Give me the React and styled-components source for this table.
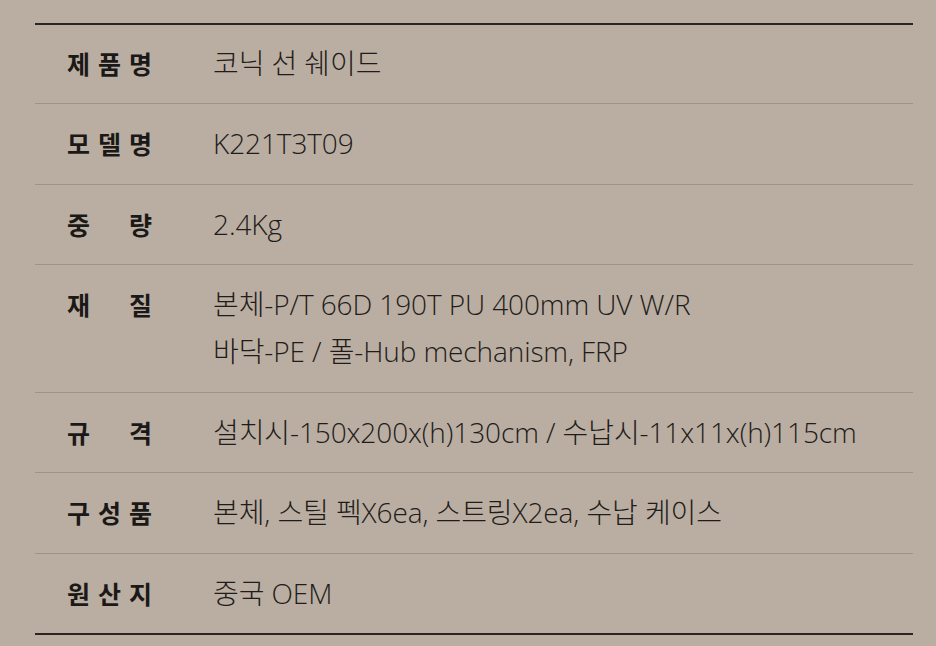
import React from "react"
import styled, { createGlobalStyle } from "styled-components"

const GlobalStyle = createGlobalStyle`
  html, body {
    margin: 0;
    padding: 0;
    background: #baaea2;
  }
  body {
    font-family: "Noto Sans CJK KR", "Noto Sans", sans-serif;
  }
`

const Page = styled.div`
  padding: 23px 23px 0 35px;
  min-height: 646px;
  box-sizing: border-box;
`

const Table = styled.div`
  border-top: 2px solid #2b2521;
  border-bottom: 2px solid #2b2521;
`

const Row = styled.div`
  display: grid;
  grid-template-columns: 178px 1fr;
  align-items: start;
  padding: ${({ first }) => (first ? "15px 0 16px" : "16px 0 16.5px")};
  border-top: ${({ first }) => (first ? "none" : "1px solid #9f9387")};
`

const Label = styled.div`
  display: flex;
  justify-content: space-between;
  width: 85px;
  margin-left: 32px;
  font-size: 25px;
  font-weight: 700;
  line-height: 47px;
  color: #1b1917;
`

const Value = styled.div`
  font-family: "Open Sans", "Noto Sans CJK KR", sans-serif;
  font-size: 28px;
  font-weight: 300;
  line-height: 47px;
  color: #1f1c1a;
  letter-spacing: -0.1px;
`

const rows = [
  { label: "제품명", value: ["코닉 선 쉐이드"] },
  { label: "모델명", value: ["K221T3T09"] },
  { label: "중량", value: ["2.4Kg"] },
  {
    label: "재질",
    value: ["본체-P/T 66D 190T PU 400mm UV W/R", "바닥-PE / 폴-Hub mechanism, FRP"],
  },
  { label: "규격", value: ["설치시-150x200x(h)130cm / 수납시-11x11x(h)115cm"] },
  { label: "구성품", value: ["본체, 스틸 펙X6ea, 스트링X2ea, 수납 케이스"] },
  { label: "원산지", value: ["중국 OEM"] },
]

const App = () => (
  <>
    <GlobalStyle />
    <Page>
      <Table>
        {rows.map((row, i) => (
          <Row key={row.label} first={i === 0}>
            <Label>
              {row.label.split("").map((ch, j) => (
                <span key={j}>{ch}</span>
              ))}
            </Label>
            <Value>
              {row.value.map(line => (
                <div key={line}>{line}</div>
              ))}
            </Value>
          </Row>
        ))}
      </Table>
    </Page>
  </>
)

export default App
